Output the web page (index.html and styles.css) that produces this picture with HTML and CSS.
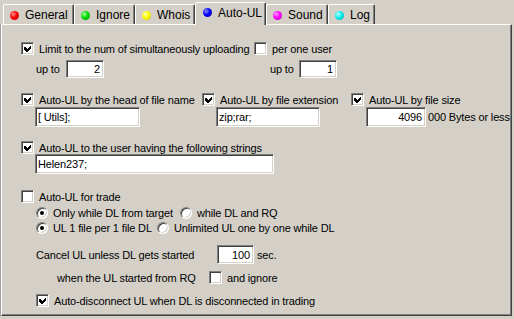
FILE: index.html
```html
<!DOCTYPE html>
<html lang="en">
<head>
  <meta charset="UTF-8">
  <meta name="viewport" content="width=device-width, initial-scale=1.0">
  <title>Auto-UL</title>
  <link rel="stylesheet" href="styles.css">
</head>
<body>
  <div class="tabs">
    <div class="tab t-general"><span class="ball red"></span>General</div>
    <div class="tab t-ignore"><span class="ball green"></span>Ignore</div>
    <div class="tab t-whois"><span class="ball yellow"></span>Whois</div>
    <div class="tab t-autoul active"><span class="ball blue"></span>Auto-UL</div>
    <div class="tab t-sound"><span class="ball magenta"></span>Sound</div>
    <div class="tab t-log"><span class="ball cyan"></span>Log</div>
  </div>

  <div class="panel">
    <div class="row row-limit">
      <label class="opt limit-main"><span class="cb on"><svg viewBox="0 0 7 7" width="7" height="7"><polygon points="0,2 1,2 3,4 7,0 7,3 3,7 2,7 0,5"/></svg></span>Limit to the num of simultaneously uploading</label>
      <label class="opt"><span class="cb"></span>per one user</label>
    </div>
    <div class="row row-upto">
      <div class="upto upto-main"><span class="upto-label">up to</span><input class="field num w-small" value="2"></div>
      <div class="upto"><span class="upto-label">up to</span><input class="field num w-small" value="1"></div>
    </div>

    <div class="filters">
      <div class="filter">
        <label class="opt"><span class="cb on"><svg viewBox="0 0 7 7" width="7" height="7"><polygon points="0,2 1,2 3,4 7,0 7,3 3,7 2,7 0,5"/></svg></span>Auto-UL by the head of file name</label>
        <div class="filter-input"><input class="field w-name" value="[ Utils];"></div>
      </div>
      <div class="filter">
        <label class="opt"><span class="cb on"><svg viewBox="0 0 7 7" width="7" height="7"><polygon points="0,2 1,2 3,4 7,0 7,3 3,7 2,7 0,5"/></svg></span>Auto-UL by file extension</label>
        <div class="filter-input"><input class="field w-ext" value="zip;rar;"></div>
      </div>
      <div class="filter">
        <label class="opt"><span class="cb on"><svg viewBox="0 0 7 7" width="7" height="7"><polygon points="0,2 1,2 3,4 7,0 7,3 3,7 2,7 0,5"/></svg></span>Auto-UL by file size</label>
        <div class="filter-input size"><input class="field num w-size" value="4096"><span class="unit">000 Bytes or less</span></div>
      </div>
    </div>

    <div class="row row-user">
      <label class="opt"><span class="cb on"><svg viewBox="0 0 7 7" width="7" height="7"><polygon points="0,2 1,2 3,4 7,0 7,3 3,7 2,7 0,5"/></svg></span>Auto-UL to the user having the following strings</label>
    </div>
    <div class="row row-users-input">
      <input class="field w-user" value="Helen237;">
    </div>

    <div class="row row-trade">
      <label class="opt"><span class="cb"></span>Auto-UL for trade</label>
    </div>
    <div class="row row-radio first">
      <label class="opt radio-a"><span class="rb on"></span>Only while DL from target</label>
      <label class="opt"><span class="rb"></span>while DL and RQ</label>
    </div>
    <div class="row row-radio second">
      <label class="opt radio-b"><span class="rb on"></span>UL 1 file per 1 file DL</label>
      <label class="opt"><span class="rb"></span>Unlimited UL one by one while DL</label>
    </div>

    <div class="row row-cancel">
      <span class="cancel-label">Cancel UL unless DL gets started</span>
      <input class="field num w-sec" value="100">
      <span class="unit">sec.</span>
    </div>
    <div class="row row-rq">
      <span class="rq-label">when the UL started from RQ</span>
      <label class="opt"><span class="cb"></span>and ignore</label>
    </div>
    <div class="row row-disconnect">
      <label class="opt"><span class="cb on"><svg viewBox="0 0 7 7" width="7" height="7"><polygon points="0,2 1,2 3,4 7,0 7,3 3,7 2,7 0,5"/></svg></span>Auto-disconnect UL when DL is disconnected in trading</label>
    </div>
  </div>
</body>
</html>
```

FILE: styles.css
```css
body {
  margin: 0;
  background: #d4d0c8;
  font-family: "Liberation Sans", Arial, sans-serif;
  font-size: 11px;
  letter-spacing: -0.15px;
  color: #000;
  width: 514px;
  height: 319px;
  overflow: hidden;
}

/* tabs */
.tabs {
  display: flex;
  align-items: flex-end;
  height: 24px;
  padding-left: 3px;
  position: relative;
  z-index: 1;
}
.tab {
  box-sizing: border-box;
  height: 20px;
  display: flex;
  align-items: center;
  gap: 6px;
  padding-left: 6px;
  padding-top: 1px;
  font-size: 12px;
  letter-spacing: 0;
  background: #d4d0c8;
  border-top: 1px solid #fff;
  border-left: 1px solid #fff;
  border-right: 1px solid #404040;
  border-radius: 2px 2px 0 0;
  box-shadow: inset -1px 0 #808080;
}
.tab.active {
  height: 23px;
  margin-bottom: -1px;
  padding-bottom: 4px;
  padding-left: 7px;
}
.t-general { width: 71px; }
.t-ignore { width: 61px; }
.t-whois { width: 60px; }
.t-autoul { width: 71px; }
.t-sound { width: 62px; }
.t-log { width: 47px; }

.ball {
  width: 9px;
  height: 9px;
  border-radius: 50%;
  flex: none;
}
.red { background: radial-gradient(circle at 35% 35%, #ff9090 0, #f00 45%, #a00 100%); }
.green { background: radial-gradient(circle at 35% 35%, #a0ffa0 0, #0d0 45%, #080 100%); }
.yellow { background: radial-gradient(circle at 35% 35%, #ffffc0 0, #ff0 45%, #bb0 100%); }
.blue { background: radial-gradient(circle at 35% 35%, #9090ff 0, #00f 45%, #000090 100%); }
.magenta { background: radial-gradient(circle at 35% 35%, #ffa0ff 0, #f0f 45%, #a000a0 100%); }
.cyan { background: radial-gradient(circle at 35% 35%, #c0ffff 0, #0ee 45%, #0aa 100%); }

/* panel */
.panel {
  box-sizing: border-box;
  width: 511px;
  height: 292px;
  margin-left: 1px;
  padding: 17px 0 0 19px;
  border-top: 1px solid #fff;
  border-left: 1px solid #fff;
  border-right: 1px solid #404040;
  border-bottom: 1px solid #404040;
  box-shadow: inset -1px -1px #808080, -1px 0 #a0a0a0;
}

.row {
  display: flex;
  align-items: center;
  height: 13px;
  white-space: nowrap;
}
.opt {
  display: flex;
  align-items: center;
  gap: 5px;
  white-space: nowrap;
}

/* checkbox & radio */
.cb {
  box-sizing: border-box;
  width: 13px;
  height: 13px;
  flex: none;
  background: #fff;
  border: 1px solid;
  border-color: #808080 #fff #fff #808080;
  box-shadow: inset 1px 1px #404040, inset -1px -1px #d4d0c8;
  display: flex;
  align-items: center;
  justify-content: center;
}
.cb svg {
  display: block;
  shape-rendering: crispEdges;
}
.rb {
  box-sizing: border-box;
  position: relative;
  width: 12px;
  height: 12px;
  flex: none;
  background: #fff;
  border-radius: 50%;
  border: 1px solid;
  border-color: #808080 #fff #fff #808080;
  box-shadow: inset 1px 1px #404040, inset -1px -1px #d4d0c8;
}
.rb.on::after {
  content: "";
  position: absolute;
  left: 3px;
  top: 3px;
  width: 4px;
  height: 4px;
  border-radius: 50%;
  background: #000;
}

/* text fields */
.field {
  box-sizing: border-box;
  margin: 0;
  padding: 0 2px;
  font: inherit;
  letter-spacing: inherit;
  color: #000;
  background: #fff;
  border: 1px solid;
  border-color: #808080 #fff #fff #808080;
  box-shadow: inset 1px 1px #404040, inset -1px -1px #d4d0c8;
  outline: none;
}
.field.num {
  text-align: right;
  padding-right: 3px;
}
.w-small { width: 38px; height: 18px; }
.w-name { width: 105px; height: 20px; }
.w-ext { width: 104px; height: 20px; }
.w-size { width: 60px; height: 20px; padding-right: 2px; }
.w-user { width: 239px; height: 20px; }
.w-sec { width: 37px; height: 19px; }

.unit { margin-left: 2px; }

/* first block */
.limit-main { width: 233px; }
.row-upto {
  height: 18px;
  margin-top: 5px;
  padding-left: 15px;
}
.upto { display: flex; align-items: center; }
.upto-main { width: 234px; }
.upto-label { width: 30px; }
.upto:not(.upto-main) .upto-label { width: 29px; }

/* filters */
.filters {
  display: grid;
  grid-template-columns: 181px 149px auto;
  margin-top: 15px;
}
.filter .opt { height: 13px; }
.filter-input {
  display: flex;
  align-items: center;
  height: 20px;
  margin-top: 1px;
  padding-left: 14px;
}
.filter-input.size { padding-left: 15px; }

.row-user { margin-top: 14px; }
.row-users-input { height: 20px; padding-left: 14px; }

/* trade */
.row-trade { margin-top: 16px; }
.row-radio { padding-left: 15px; }
.row-radio.first { margin-top: 3px; }
.row-radio.second { margin-top: 2px; }
.radio-a { width: 144px; }
.radio-b { width: 121px; }

.row-cancel {
  height: 19px;
  margin-top: 11px;
  padding-left: 15px;
}
.cancel-label { width: 181px; }
.row-cancel .unit { margin-left: 3px; }

.row-rq {
  margin-top: 7px;
  padding-left: 36px;
}
.rq-label { width: 152px; }

.row-disconnect {
  margin-top: 10px;
  padding-left: 15px;
}
```
